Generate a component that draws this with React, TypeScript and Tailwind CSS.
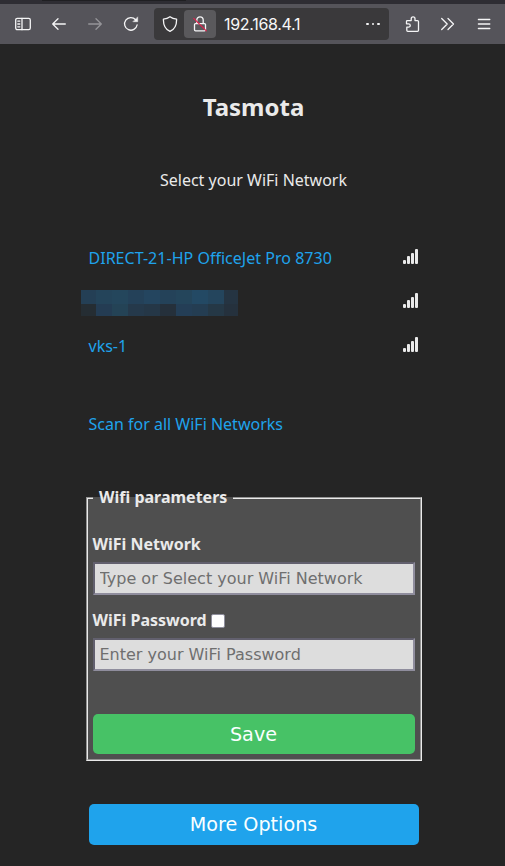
import React from 'react';

const mosaicTop = ['#243f55', '#24445a', '#24465c', '#244159', '#24455f', '#244259', '#24455b', '#234964', '#24455d', '#253442'];
const mosaicBottom = ['#252d33', '#243c53', '#244356', '#25394b', '#253747', '#25303b', '#243e56', '#243d52', '#253846', '#25313d'];

function MosaicRow({ colors, className }: { colors: string[]; className: string }) {
  return (
    <div className={'grid grid-cols-[15px_repeat(8,16px)_14px] ' + className}>
      {colors.map((color, i) => <i key={i} style={{ backgroundColor: color }} />)}
    </div>
  );
}

function Signal() {
  return (
    <div className="flex h-[15px] items-end gap-px">
      <i className="h-1 w-[3px] rounded-[1px] bg-[#eaeaea]" />
      <i className="h-2 w-[3px] rounded-[1px] bg-[#eaeaea]" />
      <i className="h-[11px] w-[3px] rounded-[1px] bg-[#eaeaea]" />
      <i className="h-[15px] w-[3px] rounded-[1px] bg-[#eaeaea]" />
    </div>
  );
}

function Icon({ children, className = '' }: { children: React.ReactNode; className?: string }) {
  return (
    <svg viewBox="0 0 16 16" fill="none" stroke="#f5f5f6" strokeWidth="1.3" strokeLinecap="round" strokeLinejoin="round" className={'h-4 w-4 shrink-0 ' + className}>
      {children}
    </svg>
  );
}

function Toolbar() {
  return (
    <header>
      <div className="flex h-1 bg-[#2e2d33] pl-[42px]">
        <div className="h-px w-36 bg-[#1f1f22]" />
      </div>
      <div className="flex h-10 items-center bg-[#55545a] pl-[15px]">
        <Icon>
          <rect x=".7" y="2.3" width="14.6" height="11.4" rx="1.6" />
          <path d="M7 2.3v11.4M2.8 5.1h2M2.8 8h2M2.8 10.8h2" />
        </Icon>
        <Icon className="ml-5"><path d="M14.3 8H1.7M7 2.7 1.7 8 7 13.3" /></Icon>
        <Icon className="ml-5 opacity-40"><path d="M1.7 8h12.6M9 2.7 14.3 8 9 13.3" /></Icon>
        <Icon className="ml-5">
          <path d="M14.1 9A6.3 6.3 0 1 1 12.6 3.7" />
          <path d="M14.7 1.2v4.5h-4.5z" fill="#f5f5f6" strokeWidth=".5" />
        </Icon>
        <div className="ml-[15px] flex h-8 w-[235px] items-center rounded bg-[#3a393b]">
          <Icon className="ml-2">
            <path d="M8 .7c2 1.5 4.2 2.2 6.6 2.5.1 5.3-1.2 9.8-6.6 12.1C2.6 13 1.3 8.5 1.4 3.2 3.8 2.9 6 2.2 8 .7z" />
          </Icon>
          <div className="ml-1.5 flex h-7 w-8 items-center justify-center rounded bg-[#5a595c]">
            <Icon>
              <path d="M4.8 7.5V4a3.2 3.2 0 0 1 6.4 0v3.5M3.5 7.6h9a1 1 0 0 1 1 1v5.2a1 1 0 0 1-1 1h-9a1 1 0 0 1-1-1V8.6a1 1 0 0 1 1-1z" />
              <path d="M1.7 2.3 14.3 14.9" stroke="#df204b" strokeWidth="1.2" />
            </Icon>
          </div>
          <span className="ml-2 font-['Inter',sans-serif] text-[16px] leading-5 tracking-[-0.3px] text-[#f7f7f8]">192.168.4.1</span>
          <div className="mr-[9px] ml-auto flex gap-[3px]">
            <i className="h-[2.6px] w-[2.6px] rounded-full bg-[#f5f5f6]" />
            <i className="h-[2.6px] w-[2.6px] rounded-full bg-[#f5f5f6]" />
            <i className="h-[2.6px] w-[2.6px] rounded-full bg-[#f5f5f6]" />
          </div>
        </div>
        <Icon className="ml-[15px]">
          <path d="M3.3 4.6H7.2V2.7a1.9 1.9 0 0 1 3.8 0v1.9h2.5a1 1 0 0 1 1 1v8.7a1 1 0 0 1-1 1H3.8a1 1 0 0 1-1-1v-3.2h1.8a1.6 1.6 0 0 0 0-3.3H2.5V5.4a.8.8 0 0 1 .8-.8z" />
        </Icon>
        <Icon className="ml-5"><path d="M1.7 2.5 7.2 8l-5.5 5.5M8 2.5 13.5 8 8 13.5" /></Icon>
        <Icon className="ml-5"><path d="M2.4 3.5h11.4M2.4 8h11.4M2.4 12.5h11.4" /></Icon>
      </div>
    </header>
  );
}

function TextInput({ label, placeholder }: { label: string; placeholder: string }) {
  return (
    <input
      aria-label={label}
      placeholder={placeholder}
      className="block h-[33px] w-[322px] border-2 border-t-[#62606e] border-r-[#8f8d9d] border-b-[#8f8d9d] border-l-[#62606e] bg-[#dddddd] px-[4.5px] pb-px font-['DejaVu_Sans',sans-serif] text-[16px] text-black outline-none placeholder:text-[#6f6f6f]"
    />
  );
}

export default function App() {
  return (
    <div className="h-[866px] w-[505px] overflow-hidden bg-[#252525] font-['Noto_Sans',sans-serif] text-[16px] leading-6 text-[#eaeaea]">
      <Toolbar />
      <main className="pl-[86px]">
        <h1 className="mt-[47px] w-[335px] text-center text-[24px] leading-8 font-bold">Tasmota</h1>
        <p className="mt-[45px] w-[335px] text-center">Select your WiFi Network</p>
        <div className="mt-[54px] flex w-[332px] items-center justify-between pl-[2.5px]">
          <a className="tracking-[0.02px] text-[#1fa3ec]">DIRECT-21-HP OfficeJet Pro 8730</a>
          <div className="-mt-[3px]"><Signal /></div>
        </div>
        <div className="mt-5 -ml-[5px] flex h-[26px] w-[337px] justify-between">
          <div>
            <MosaicRow colors={mosaicTop} className="h-3.5" />
            <MosaicRow colors={mosaicBottom} className="h-3" />
          </div>
          <div className="pt-[3px]"><Signal /></div>
        </div>
        <div className="mt-[18px] flex w-[332px] items-center justify-between pl-[2.5px]">
          <a className="text-[#1fa3ec]">vks-1</a>
          <div className="-mt-[3px]"><Signal /></div>
        </div>
        <p className="mt-[54px] pl-[2.5px] text-[#1fa3ec]">Scan for all WiFi Networks</p>
        <section className="relative mt-[61px] h-[264px] w-[336px] border border-t-[#929292] border-r-[#eaeaea] border-b-[#eaeaea] border-l-[#929292] bg-[#4f4f4f]">
          <div className="h-[262px] border border-t-[#eaeaea] border-r-[#929292] border-b-[#929292] border-l-[#eaeaea] pl-[5px]">
            <div className="-ml-[0.5px] pt-[33px] font-bold">WiFi Network</div>
            <div className="mt-[6px]"><TextInput label="WiFi Network" placeholder="Type or Select your WiFi Network" /></div>
            <div className="mt-[13px] -ml-[0.5px] flex items-center font-bold">
              WiFi Password
              <i className="mt-[2px] ml-1 h-[14px] w-[14px] rounded-[2px] border border-[#8f8f9d] bg-white" />
            </div>
            <div className="mt-[6px]"><TextInput label="WiFi Password" placeholder="Enter your WiFi Password" /></div>
            <button className="mt-[43px] block h-10 w-[322px] rounded-[5px] bg-[#47c266] pt-px pr-px font-['DejaVu_Sans',sans-serif] text-[19.2px] text-[#faffff]">Save</button>
          </div>
          <div className="absolute -top-px left-[6px] h-[2px] w-[140px] bg-[#4f4f4f] pl-[6px] font-bold whitespace-nowrap">
            <div className="-mt-3">Wifi parameters</div>
          </div>
        </section>
        <button className="mt-[43px] ml-[3px] block h-[41px] w-[330px] rounded-[5px] bg-[#1fa3ec] pt-px pr-px font-['DejaVu_Sans',sans-serif] text-[19.2px] text-[#faffff]">More Options</button>
      </main>
    </div>
  );
}
